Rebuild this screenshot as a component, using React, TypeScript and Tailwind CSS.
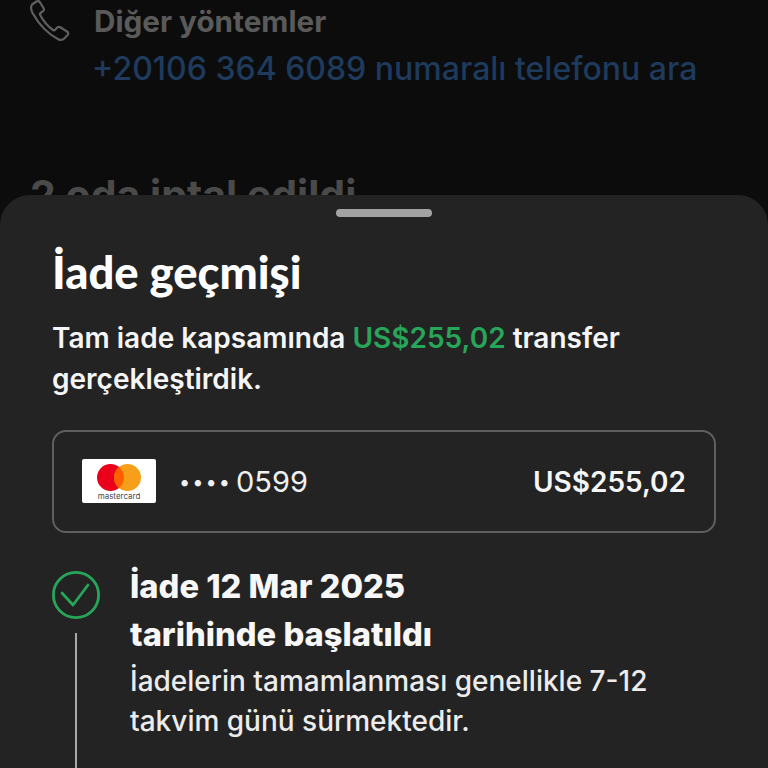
function PhoneIcon() {
  return (
    <svg width="44" height="44" viewBox="0 0 44 44" fill="none" stroke="#5f5f5f" strokeWidth="2.2" strokeLinejoin="round">
      <path d="M4 4.5 L8.5 1.5 C10 0.7 11.3 1.2 12 2.4 L15.5 8 C16.2 9.2 16 10.4 15 11.2 L12.5 13 C11.8 13.6 11.8 14.3 12.2 15 C15 20.5 19.5 26 25 30 C25.8 30.6 26.6 30.5 27.2 29.8 L29.2 27.6 C30 26.7 31.2 26.6 32.3 27.3 L39 31.5 C40.4 32.4 40.6 33.8 39.6 35 L36.5 38.2 C34.8 40 32.5 40.4 30.2 39.2 C20.5 34.2 11 24.5 4.5 13 C3 10 2.8 6.5 4 4.5 Z" />
    </svg>
  );
}

function MastercardLogo() {
  return (
    <div className="w-[74px] h-[44px] mb-[2px] bg-white rounded-[2px] flex flex-col items-center pt-[5px]">
      <svg width="44" height="27" viewBox="0 0 44 27">
        <circle cx="13.5" cy="13.5" r="13.5" fill="#eb001b" />
        <circle cx="30.5" cy="13.5" r="13.5" fill="#f79e1b" />
        <path d="M22 3 A13.5 13.5 0 0 1 22 24 A13.5 13.5 0 0 1 22 3 Z" fill="#ff5f00" />
      </svg>
      <span className="text-[8px] leading-[9px] mt-[1px] text-[#4a4a4a] font-['Inter',sans-serif]">mastercard</span>
    </div>
  );
}

function CheckCircle() {
  return (
    <svg width="48" height="48" viewBox="0 0 48 48" fill="none" stroke="#27a558" strokeWidth="2.8" strokeLinecap="round" strokeLinejoin="round">
      <circle cx="24" cy="24" r="22.6" />
      <path d="M10 22 L21 34 L36 14" />
    </svg>
  );
}

export default function App() {
  return (
    <div className="relative w-[768px] h-[768px] overflow-hidden bg-[#0c0c0c] font-['Inter',sans-serif]">
      <div className="flex gap-[22px] pl-[28px]">
        <PhoneIcon />
        <div className="pt-[3px]">
          <div className="text-[29.7px] leading-[36px] font-bold text-[#5a5a5a]">Diğer yöntemler</div>
          <div className="mt-[11px] -ml-[2px] text-[32px] leading-[38px] font-medium text-[#1e3a5c]">+20106 364 6089 numaralı telefonu ara</div>
        </div>
      </div>
      <div className="pl-[30px] mt-[82px] text-[41px] leading-[50px] font-bold text-[#4a4a4a]">2 oda iptal edildi</div>

      <div className="absolute left-0 right-0 top-[195px] bottom-0 bg-[#232323] rounded-t-[30px] px-[52px]">
        <div className="flex justify-center pt-[14px]">
          <div className="w-[96px] h-[8px] rounded-full bg-[#a3a3a3]" />
        </div>
        <h1 className="mt-[30px] text-[45.4px] leading-[50px] font-['Lato',sans-serif] font-black text-white">İade geçmişi</h1>
        <p className="mt-[21px] text-[28px] leading-[41px] font-semibold text-[#f5f5f5]">
          Tam iade kapsamında <span className="text-[#27a558]">US$255,02</span> transfer
          <br />
          gerçekleştirdik.
        </p>
        <div className="mt-[30px] h-[103px] border-2 border-[#5e5e5e] rounded-[14px] flex items-center pl-[28px] pr-[28px]">
          <MastercardLogo />
          <span className="ml-[23px] text-[20px] tracking-[2px] text-[#f0f0f0]">••••</span>
          <span className="ml-[4px] text-[29px] text-[#f0f0f0]">0599</span>
          <span className="ml-auto text-[28px] font-semibold text-[#f5f5f5]">US$255,02</span>
        </div>
        <div className="mt-[38px] flex gap-[30px]">
          <div className="flex flex-col items-center w-[48px] shrink-0">
            <CheckCircle />
            <div className="mt-[14px] w-[2px] h-[140px] bg-[#a8a8a8]" />
          </div>
          <div className="-mt-[9px]">
            <div className="text-[32.7px] leading-[48px] font-extrabold text-[#f7f7f7]">
              İade 12 Mar 2025
              <br />
              tarihinde başlatıldı
            </div>
            <div className="mt-[3px] text-[28px] leading-[40px] font-medium text-[#ececec]">
              İadelerin tamamlanması genellikle 7-12
              <br />
              takvim günü sürmektedir.
            </div>
          </div>
        </div>
      </div>
    </div>
  );
}
